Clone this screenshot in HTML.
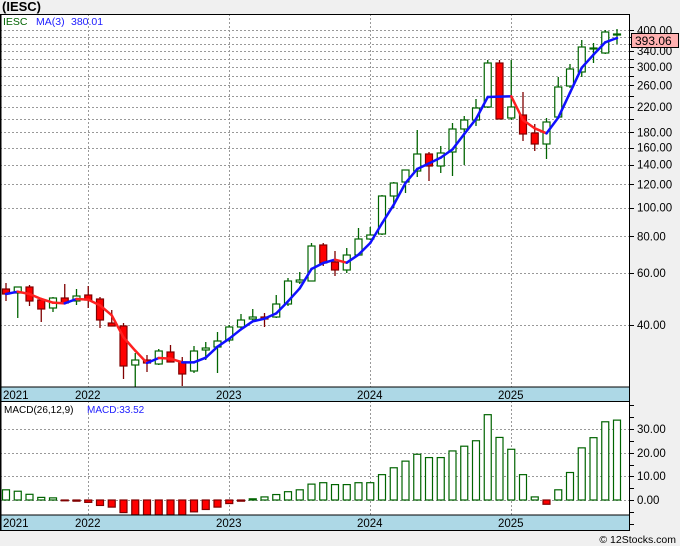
<!DOCTYPE html>
<html><head><meta charset="utf-8"><style>
html,body{margin:0;padding:0;background:#f0f0f0;width:680px;height:546px;overflow:hidden}
svg{display:block;font-family:"Liberation Sans","DejaVu Sans",sans-serif}
</style></head><body>
<svg id="s" width="680" height="546" xmlns="http://www.w3.org/2000/svg">
<rect x="0" y="0" width="680" height="546" fill="#f0f0f0"/>
<rect x="0" y="14" width="629" height="516" fill="#fff"/>
<text x="2" y="11" font-size="13" font-weight="bold" fill="#000">(IESC)</text>
<rect x="0" y="387" width="629" height="14" fill="#add8e6"/>
<rect x="0" y="515" width="629" height="15" fill="#add8e6"/>
<g id="g"></g>
<text x="3" y="25" font-size="10.5" fill="#006400">IESC</text>
<text x="36" y="25" font-size="10.5" fill="#2020ff">MA(3)</text>
<text x="71" y="25" font-size="10.5" fill="#2020ff">380.01</text>
<text x="4" y="413" font-size="10" fill="#000">MACD(26,12,9)</text>
<text x="87" y="413" font-size="10" fill="#2020ff">MACD:33.52</text>
<g font-size="11.5" fill="#000">
<text x="3" y="399">2021</text><text x="75" y="399">2022</text><text x="216" y="399">2023</text><text x="357" y="399">2024</text><text x="498" y="399">2025</text>
<text x="3" y="527">2021</text><text x="75" y="527">2022</text><text x="216" y="527">2023</text><text x="357" y="527">2024</text><text x="498" y="527">2025</text>
</g>
<rect x="0.5" y="14.5" width="629" height="516" fill="none" stroke="#000"/>
<line x1="0" y1="387" x2="629" y2="387" stroke="#000"/>
<line x1="0" y1="401.5" x2="629" y2="401.5" stroke="#000"/>
<line x1="0" y1="515" x2="629" y2="515" stroke="#000"/>
<line x1="0.5" y1="14" x2="0.5" y2="530" stroke="#000" stroke-width="2"/>
<text x="676" y="543" font-size="10.5" fill="#000" text-anchor="end">© 12Stocks.com</text>
</svg>
<script>
var g=document.getElementById('g'),N='http://www.w3.org/2000/svg';
function el(t,a,txt){var e=document.createElementNS(N,t);for(var k in a)e.setAttribute(k,a[k]);if(txt)e.textContent=txt;g.appendChild(e);return e;}
function py(p){return 325-128*Math.log(p/40);}
var gp=[40,60,80];for(var p=100;p<=400;p+=20)gp.push(p);
gp.forEach(function(p){var y=Math.round(py(p))+.5;el('line',{x1:0,y1:y,x2:629,y2:y,stroke:'#999','stroke-dasharray':'2,2'});el('line',{x1:629,y1:y,x2:634,y2:y,stroke:'#000'});});
[400,340,300,260,220,180,160,140,120,100,80,60,40].forEach(function(p){el('text',{x:637,y:py(p)+4,'font-size':11.5,fill:'#000'},p.toFixed(2));});
[88,229,370,511].forEach(function(x){el('line',{x1:x+.5,y1:14,x2:x+.5,y2:387,stroke:'#999','stroke-dasharray':'2,2'});el('line',{x1:x+.5,y1:401,x2:x+.5,y2:515,stroke:'#999','stroke-dasharray':'2,2'});});
[[0,500],[10,476],[20,453],[30,429]].forEach(function(a){el('line',{x1:0,y1:a[1]+.5,x2:629,y2:a[1]+.5,stroke:'#999','stroke-dasharray':'2,2'});el('text',{x:637,y:a[1]+4,'font-size':11.5,fill:'#000'},a[0].toFixed(2));});
[405,417,429,441,453,465,476,488,500,512,524].forEach(function(y){el('line',{x1:629,y1:y+.5,x2:634,y2:y+.5,stroke:'#000'});});
var C=[[289,294,283,301],[293,287,287,318],[287,301,285,306],[300,309,300,322],[308,298,297,312],[298,303,284,303],[301,296,289,305],[295,300,286,308],[299,320,297,328],[323,326,310,326],[326,366,323,379],[365,360,353,387],[360,363,355,372],[364,351,349,365],[352,362,345,362],[362,374,357,386],[371,351,346,373],[350,348,342,360],[347,341,332,373],[340,327,325,342],[327,320,314,328],[319,317,309,320],[317,319,313,327],[317,304,295,318],[304,281,278,306],[282,280,272,284],[281,246,243,281],[245,263,243,266],[262,270,251,276],[270,255,248,273],[255,239,228,256],[239,235,227,240],[234,196,195,235],[196,183,182,208],[182,170,170,193],[171,154,130,177],[154,166,152,181],[166,153,146,173],[152,129,123,176],[129,120,116,165],[120,108,99,126],[107,63,60,108],[63,119,60,119],[118,107,60,120],[115,134,92,141],[133,144,124,151],[144,122,118,159],[117,87,77,118],[86,69,64,88],[72,47,40,77],[49,48,43,63],[53,32,30,54],[34,34,29,44]];
function X(i){return 6+11.75*i;}
C.forEach(function(c,i){var x=X(i),up=c[1]<=c[0],col=up?'#006400':'#800000';
el('line',{x1:x,y1:c[2],x2:x,y2:c[3],stroke:col,'stroke-width':1.3});
var t=Math.min(c[0],c[1]),h=Math.max(Math.abs(c[0]-c[1]),1);
el('rect',{x:x-3.5,y:t,width:7,height:h,fill:up?'#fff':'#ff0000',stroke:col,'stroke-width':1.2});});
var ma=[];C.forEach(function(c,i){var a=C[Math.max(i-2,0)][1],b=C[Math.max(i-1,0)][1];ma.push((a+b+c[1])/3);});
for(var i=1;i<ma.length;i++){el('line',{x1:X(i-1),y1:ma[i-1],x2:X(i),y2:ma[i],stroke:ma[i]>ma[i-1]+0.3?'#ff2020':'#1010ff','stroke-width':2.5,'stroke-linecap':'round'});}
el('rect',{x:631.5,y:33.5,width:47,height:14,fill:'#ffb0b0',stroke:'#000'});
el('text',{x:635,y:45,'font-size':12,fill:'#000'},'393.06');
var M=[4.3,3.7,2.4,1.1,0.9,-0.2,-0.5,-1,-2.3,-3,-5.3,-6.3,-6.3,-6.3,-6.3,-6.3,-5,-4,-3,-1.5,-0.5,0.5,1.3,2.3,3.5,4.3,6.7,7.3,6.5,6.5,7.3,7.3,10.7,13.6,16.4,19.3,17.9,17.9,20.7,22.7,25,36,26.4,21.4,10.7,1.3,-1.8,4.3,11.6,22,26.3,33,33.7];
M.forEach(function(v,i){var x=X(i),h=v*2.37,neg=v<0;
el('rect',{x:x-3.5,y:neg?500:500-h,width:7,height:Math.max(Math.abs(h),0.8),fill:neg?'#ff0000':'#fff',stroke:neg?'#800000':'#006400','stroke-width':1.2});});
</script>
</body></html>
